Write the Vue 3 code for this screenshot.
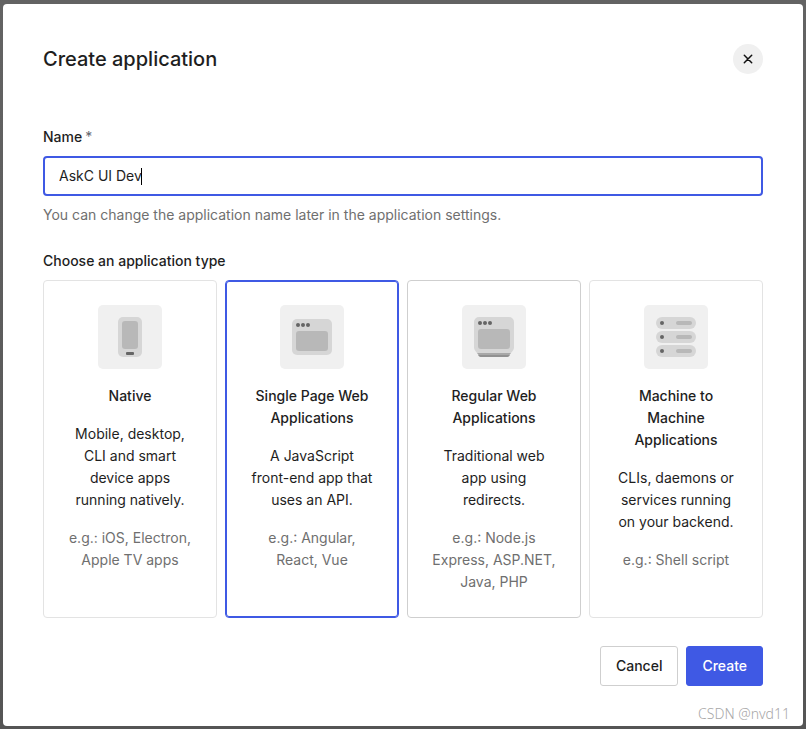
<script setup>
import { ref } from 'vue'

const name = ref('AskC UI Dev')
const selected = ref('spa')

const types = [
  { id: 'native', title: 'Native', text: 'Mobile, desktop, CLI and smart device apps running natively.', example: 'e.g.: iOS, Electron, Apple TV apps' },
  { id: 'spa', title: 'Single Page Web Applications', text: 'A JavaScript front-end app that uses an API.', example: 'e.g.: Angular, React, Vue' },
  { id: 'regular', title: 'Regular Web Applications', text: 'Traditional web app using redirects.', example: 'e.g.: Node.js Express, ASP.NET, Java, PHP', hovered: true },
  { id: 'm2m', title: 'Machine to Machine Applications', text: 'CLIs, daemons or services running on your backend.', example: 'e.g.: Shell script' }
]
</script>

<template>
  <div class="backdrop">
    <form class="dialog" role="dialog" aria-labelledby="dialog-title" @submit.prevent>
      <header class="header">
        <h1 id="dialog-title" class="title">Create application</h1>
        <button class="close" type="button" aria-label="Close">
          <svg width="10" height="10" viewBox="0 0 10 10" aria-hidden="true">
            <path d="M1.300 1.300l7.400 7.400M8.700 1.300l-7.400 7.400" fill="none" stroke="#111" stroke-width="1.500" stroke-linecap="round" />
          </svg>
        </button>
      </header>

      <div class="field">
        <label class="label" for="app-name">Name<span class="required">*</span></label>
        <div class="control">
          <input id="app-name" v-model="name" class="input" type="text" required aria-describedby="name-hint" />
          <span class="ghost" aria-hidden="true"><span class="ghost-text">{{ name }}</span><span class="caret"></span></span>
        </div>
        <p id="name-hint" class="hint">You can change the application name later in the application settings.</p>
      </div>

      <fieldset class="types">
        <legend class="label">Choose an application type</legend>
        <div class="cards">
          <label
            v-for="type in types"
            :key="type.id"
            class="card"
            :class="{ selected: selected === type.id, hovered: type.hovered }"
            :for="'type-' + type.id"
          >
            <input :id="'type-' + type.id" v-model="selected" class="radio" type="radio" name="type" :value="type.id" />
            <svg class="icon" width="64" height="64" viewBox="0 0 64 64" aria-hidden="true">
              <rect width="64" height="64" rx="5" fill="#f0f0f0" />
              <g v-if="type.id === 'native'">
                <rect x="20" y="12" width="24" height="40" rx="5" fill="#d6d6d6" />
                <rect x="24" y="16" width="16" height="28" rx="3" fill="#b8b8b8" />
                <rect x="28" y="47" width="8" height="3" rx="1" fill="#656565" />
              </g>
              <g v-else-if="type.id === 'spa'">
                <rect x="12" y="14" width="40" height="36" rx="5" fill="#d6d6d6" />
                <rect x="16" y="26" width="32" height="20" rx="3" fill="#b8b8b8" />
                <g fill="#656565">
                  <circle cx="18" cy="20" r="2" /><circle cx="23" cy="20" r="2" /><circle cx="28" cy="20" r="2" />
                </g>
              </g>
              <g v-else-if="type.id === 'regular'">
                <path d="M15 48h34l-1.500 2h-31z" fill="#a8a8a8" />
                <path d="M16 50h32l-1 1.200a2 2 0 0 1-1.500.8h-27a2 2 0 0 1-1.500-.8z" fill="#919191" />
                <path d="M17 12h30a5 5 0 0 1 5 5v25.500a5 5 0 0 1-1 3L49 48H15l-2-2.500a5 5 0 0 1-1-3V17a5 5 0 0 1 5-5z" fill="#d6d6d6" />
                <rect x="16" y="24" width="32" height="20" rx="3" fill="#b8b8b8" />
                <g fill="#656565">
                  <circle cx="18" cy="18" r="2" /><circle cx="23" cy="18" r="2" /><circle cx="28" cy="18" r="2" />
                </g>
              </g>
              <g v-else>
                <g v-for="y in [12, 26, 40]" :key="y">
                  <rect x="12" :y="y" width="40" height="12" rx="6" fill="#d6d6d6" />
                  <rect x="32" :y="y + 4" width="16" height="4" rx="2" fill="#b8b8b8" />
                  <circle cx="18" :cy="y + 6" r="2" fill="#656565" />
                </g>
              </g>
            </svg>
            <span class="card-title">{{ type.title }}</span>
            <span>{{ type.text }}</span>
            <span class="example">{{ type.example }}</span>
          </label>
        </div>
      </fieldset>

      <footer class="actions">
        <button class="button" type="button">Cancel</button>
        <button class="button primary" type="submit">Create</button>
      </footer>
      <span class="watermark">CSDN @nvd11</span>
    </form>
  </div>
</template>

<style>
body {
  background: #555;
}
</style>

<style scoped>
* {
  box-sizing: border-box;
}

.backdrop {
  min-height: 100vh;
  padding: 4px 3px 3px;
  background: linear-gradient(#636363, #555);
  color: #1e1e1e;
  font-family: Inter, "Liberation Sans", sans-serif;
  font-size: 14px;
  line-height: 22px;
}

.dialog {
  position: relative;
  padding: 40px;
  border-radius: 4px;
  background: #fff;
}

.header {
  display: flex;
  align-items: center;
  justify-content: space-between;
  margin-bottom: 52px;
}

.title {
  margin: 0;
  font-size: 20px;
  font-weight: 500;
  line-height: 28px;
}

.close {
  display: grid;
  place-items: center;
  width: 30px;
  height: 30px;
  padding: 0;
  border: 0;
  border-radius: 50%;
  background: #f0f0f0;
}

.field {
  margin-bottom: 24px;
}

.label {
  display: block;
  margin-bottom: 8px;
  padding: 0;
  font-weight: 500;
}

.required {
  margin-left: 3px;
  color: #65676e;
  font-weight: 400;
}

.control {
  position: relative;
}

.input {
  display: block;
  width: 100%;
  height: 40px;
  padding: 0 14px 2px;
  border: 2px solid #3f59e4;
  border-radius: 4px;
  outline: none;
  background: #fff;
  color: inherit;
  font: inherit;
}

.ghost {
  position: absolute;
  inset: 2px 16px;
  display: flex;
  align-items: center;
  pointer-events: none;
}

.ghost-text {
  visibility: hidden;
}

.caret {
  width: 1px;
  height: 17px;
  margin-left: -1px;
  background: #000;
}

.hint {
  margin: 8px 0 0;
  color: #6f6f6f;
}

.types {
  min-width: 0;
  margin: 0;
  padding: 0;
  border: 0;
}

.cards {
  display: grid;
  grid-template-columns: repeat(4, minmax(0, 1fr));
  gap: 8px;
}

.card {
  position: relative;
  display: flex;
  flex-direction: column;
  align-items: center;
  gap: 16px;
  padding: 24px;
  border: 1px solid #e3e3e3;
  border-radius: 4px;
  text-align: center;
  cursor: pointer;
}

.card.hovered {
  border-color: #cfcfcf;
}

.card.selected {
  border-color: #3f59e4;
  box-shadow: inset 0 0 0 1px #3f59e4;
}

.radio {
  position: absolute;
  margin: 0;
  opacity: 0;
}

.icon {
  display: block;
}

.card-title {
  font-weight: 500;
}

.example {
  color: #6f6f6f;
}

.actions {
  display: flex;
  justify-content: flex-end;
  gap: 8px;
  margin-top: 28px;
}

.button {
  height: 40px;
  padding: 0 15px;
  border: 1px solid #cfcfcf;
  border-radius: 3px;
  background: #fff;
  color: inherit;
  font: inherit;
  font-weight: 500;
}

.button.primary {
  border-color: #3f59e4;
  background: #3f59e4;
  color: #fff;
}

.watermark {
  position: absolute;
  right: 13px;
  bottom: 1px;
  color: #a8a8a8;
  font-family: "Noto Sans", sans-serif;
  font-weight: 300;
}
</style>
